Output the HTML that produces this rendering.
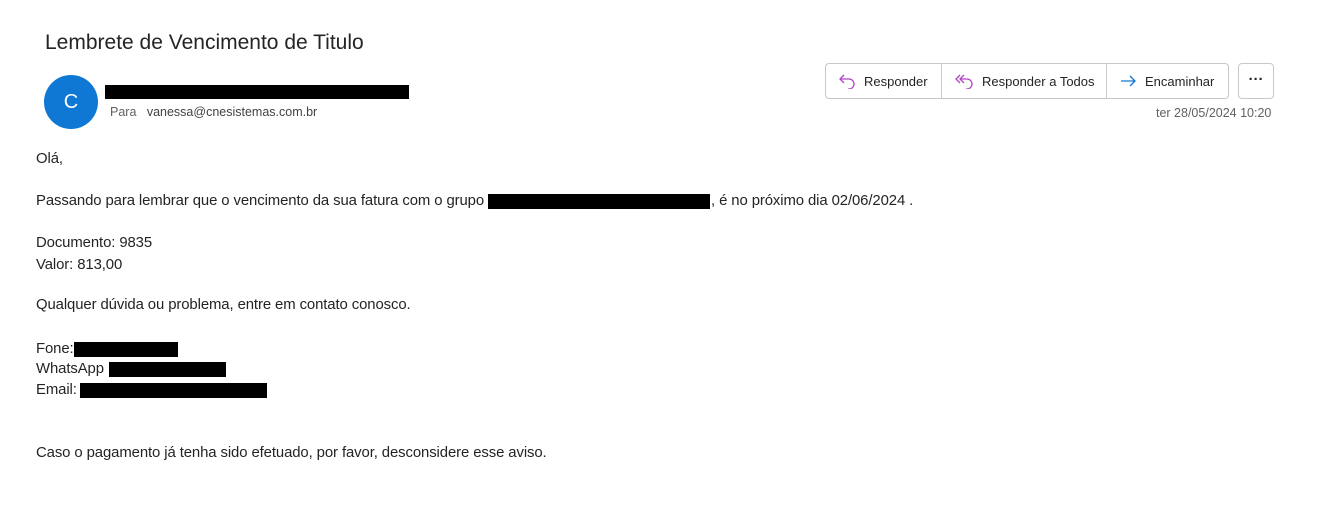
<!DOCTYPE html>
<html><head><meta charset="utf-8"><style>
body{margin:0;width:1329px;height:506px;background:#fff;font-family:"Liberation Sans",sans-serif;color:#242424;position:relative;overflow:hidden}
.a{position:absolute;white-space:nowrap}
.b{font-size:14.9px;letter-spacing:-0.1px}
.blk{position:absolute;background:#000}
.btns{position:absolute;left:825px;top:63px;height:34px;border:1px solid #c8c8c8;border-radius:4px;display:flex;font-size:13px;color:#242424}
.btns div{display:flex;align-items:center;padding:0 0 0 12px;border-right:1px solid #c8c8c8;gap:8px;box-sizing:border-box}
.btns div:last-child{border-right:none}
</style></head><body>
<div class="a" style="left:45px;top:31px;font-size:21px;color:#242424">Lembrete de Vencimento de Titulo</div>
<div class="a" style="left:44px;top:75px;width:54px;height:54px;border-radius:50%;background:#0f78d4;color:#fff;font-size:20px;line-height:54px;text-align:center">C</div>
<div class="blk" style="left:105px;top:85px;width:304px;height:14px"></div>
<div class="a" style="left:110px;top:105px;font-size:12.5px;color:#616161">Para&nbsp;&nbsp; <span style="color:#424242">vanessa@cnesistemas.com.br</span></div>
<div class="btns" style="width:402px">
<div style="width:116px"><svg width="18" height="16" viewBox="0 0 18 16"><path d="M6 2L2 6l4 4M2 6h9a5 5 0 0 1 0 10h-1" fill="none" stroke="#b146c2" stroke-width="1.3"/></svg>Responder</div>
<div style="width:165px"><svg width="20" height="16" viewBox="0 0 20 16"><path d="M6 2L2 6l4 4M10 2L6 6l4 4M6 6h7a5 5 0 0 1 0 10h-1" fill="none" stroke="#b146c2" stroke-width="1.3"/></svg>Responder a Todos</div>
<div style="width:121px"><svg width="18" height="16" viewBox="0 0 18 16"><path d="M2 8h14M11 3l5 5-5 5" fill="none" stroke="#0f78d4" stroke-width="1.3"/></svg>Encaminhar</div>
</div>
<div class="a" style="left:1238px;top:63px;width:34px;height:34px;border:1px solid #c8c8c8;border-radius:4px;text-align:center;line-height:32px;font-size:15px;font-weight:bold">···</div>
<div class="a" style="left:1156px;top:106px;font-size:12.5px;color:#616161">ter 28/05/2024 10:20</div>
<div class="a b" style="left:36px;top:151px">Olá,</div>
<div class="a b" style="left:36px;top:193px">Passando para lembrar que o vencimento da sua fatura com o grupo</div>
<div class="blk" style="left:488px;top:194px;width:222px;height:15px"></div>
<div class="a b" style="left:711px;top:193px">, é no próximo dia 02/06/2024 .</div>
<div class="a b" style="left:36px;top:235px">Documento: 9835</div>
<div class="a b" style="left:36px;top:257px">Valor: 813,00</div>
<div class="a b" style="left:36px;top:297px">Qualquer dúvida ou problema, entre em contato conosco.</div>
<div class="a b" style="left:36px;top:341px">Fone:</div>
<div class="blk" style="left:74px;top:342px;width:104px;height:15px"></div>
<div class="a b" style="left:36px;top:361px">WhatsApp</div>
<div class="blk" style="left:109px;top:362px;width:117px;height:15px"></div>
<div class="a b" style="left:36px;top:382px">Email:</div>
<div class="blk" style="left:80px;top:383px;width:187px;height:15px"></div>
<div class="a b" style="left:36px;top:445px">Caso o pagamento já tenha sido efetuado, por favor, desconsidere esse aviso.</div>
</body></html>
